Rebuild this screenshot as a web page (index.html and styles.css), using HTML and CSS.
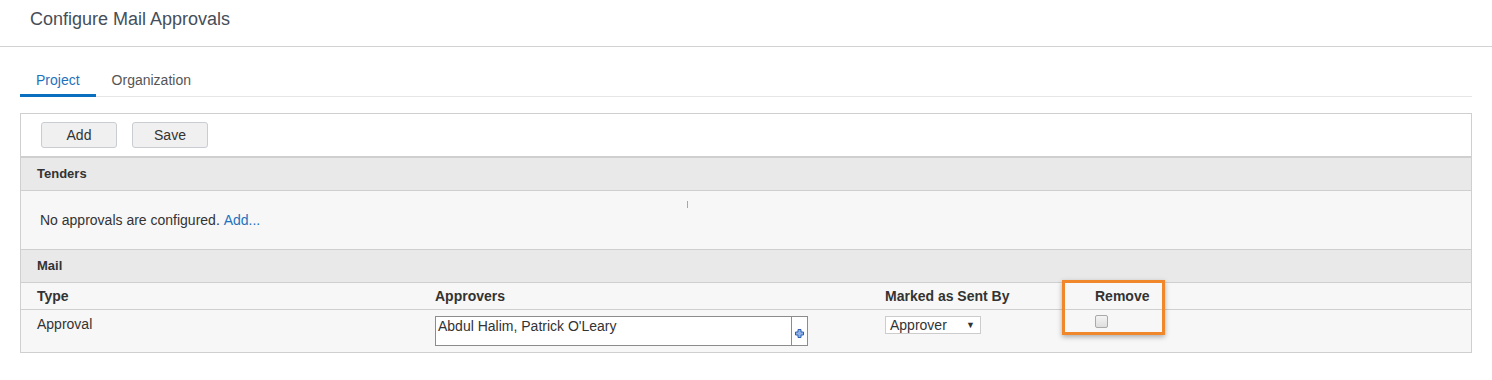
FILE: index.html
```html
<!DOCTYPE html>
<html lang="en">
<head>
    <meta charset="UTF-8">
    <title>Configure Mail Approvals</title>
    <link rel="stylesheet" href="styles.css">
</head>
<body>
    <div class="page-header">
        <h1>Configure Mail Approvals</h1>
    </div>
    <div class="content">
        <div class="tabs">
            <div class="tab active">Project</div>
            <div class="tab">Organization</div>
        </div>

        <div class="panel">
            <div class="toolbar">
                <button class="btn">Add</button>
                <button class="btn">Save</button>
            </div>

            <div class="section-head first">Tenders</div>
            <div class="section-empty">
                No approvals are configured.&nbsp;<a href="#">Add...</a>
                <span class="caret-mark"></span>
            </div>

            <div class="section-head">Mail</div>
            <div class="grid grid-head">
                <div class="cell">Type</div>
                <div class="cell">Approvers</div>
                <div class="cell">Marked as Sent By</div>
                <div class="cell">Remove</div>
            </div>
            <div class="grid grid-row">
                <div class="cell">Approval</div>
                <div class="cell">
                    <div class="picker">
                        <div class="picker-text">Abdul Halim, Patrick O'Leary</div>
                        <div class="picker-btn">
                            <svg width="9" height="9" viewBox="0 0 9 9">
                                <path d="M3 0.5h3v2.5h2.5v3h-2.5v2.5h-3v-2.5h-2.5v-3h2.5z" fill="#8fb1e6" stroke="#2f5fb3" stroke-width="1"/>
                            </svg>
                        </div>
                    </div>
                </div>
                <div class="cell">
                    <div class="select">Approver <span class="arrow">&#9660;</span></div>
                </div>
                <div class="cell">
                    <span class="checkbox"></span>
                </div>
            </div>
            <div class="highlight"></div>
        </div>
    </div>
</body>
</html>
```

FILE: styles.css
```css
body {
    margin: 0;
    font-family: "Liberation Sans", Arial, sans-serif;
    font-size: 14px;
    color: #333;
    background: #fff;
}
.page-header {
    height: 46px;
    padding: 0 30px;
    border-bottom: 1px solid #d3d3d3;
}
.page-header h1 {
    margin: 0;
    font-size: 18px;
    font-weight: normal;
    line-height: 38px;
    color: #454e59;
}
.content {
    padding: 0 20px;
}
.tabs {
    display: flex;
    margin-top: 20px;
    border-bottom: 1px solid #e6e6e6;
}
.tab {
    padding: 5px 16px 6px;
    line-height: 16px;
    color: #555;
    border-bottom: 3px solid transparent;
    margin-bottom: -1px;
}
.tab.active {
    color: #1e72bd;
    border-bottom-color: #0b6fbf;
}
.panel {
    position: relative;
    margin-top: 16px;
    border: 1px solid #cfcfcf;
}
.toolbar {
    display: flex;
    gap: 15px;
    padding: 8px 20px;
}
.btn {
    width: 76px;
    height: 26px;
    font-family: inherit;
    font-size: 14px;
    color: #333;
    background: #f0f0f0;
    border: 1px solid #c9cdd2;
    border-radius: 3px;
}
.section-head {
    height: 32px;
    line-height: 32px;
    padding: 0 16px;
    font-size: 13px;
    font-weight: bold;
    color: #333;
    background: #e9e9e9;
    border-top: 1px solid #cfcfcf;
}
.section-head.first {
    border-top: 2px solid #cfcfcf;
}
.section-empty {
    position: relative;
    display: flex;
    align-items: center;
    height: 58px;
    padding: 0 19px;
    background: #f7f7f7;
    border-top: 1px solid #cfcfcf;
}
.section-empty a {
    color: #1e72bd;
    text-decoration: none;
}
.caret-mark {
    position: absolute;
    left: 666px;
    top: 10px;
    width: 1px;
    height: 7px;
    background: #a8a8a8;
}
.grid {
    display: grid;
    grid-template-columns: 398px 450px 210px 1fr;
    background: #f7f7f7;
    border-top: 1px solid #cfcfcf;
}
.grid .cell {
    padding: 0 16px;
}
.grid-head {
    height: 26px;
    line-height: 26px;
    font-size: 14px;
    font-weight: bold;
}
.grid-row {
    height: 42px;
}
.grid-row .cell {
    padding-top: 6px;
    line-height: 16px;
}
.picker {
    display: flex;
    width: 371px;
    height: 28px;
    border: 1px solid #8c8c8c;
    background: #fff;
}
.picker-text {
    flex: 1;
    padding: 1px 2px;
}
.picker-btn {
    display: flex;
    align-items: center;
    justify-content: center;
    width: 15px;
    padding-top: 4px;
    border-left: 1px solid #8c8c8c;
}
.select {
    display: flex;
    align-items: center;
    width: 90px;
    height: 16px;
    padding-left: 4px;
    border: 1px solid #ccc;
    background: #fff;
    color: #333;
}
.select .arrow {
    margin-left: auto;
    margin-right: 5px;
    font-size: 9px;
    color: #333;
}
.checkbox {
    display: block;
    width: 11px;
    height: 11px;
    margin-top: -1px;
    border: 1px solid #a9a9a9;
    border-radius: 2px;
    background: linear-gradient(#f4f4f4, #dedede);
}
.highlight {
    position: absolute;
    left: 1041px;
    top: 166px;
    width: 97px;
    height: 49px;
    border: 3px solid #f0872a;
    box-shadow: 0 2px 5px rgba(0, 0, 0, 0.3);
}
```
